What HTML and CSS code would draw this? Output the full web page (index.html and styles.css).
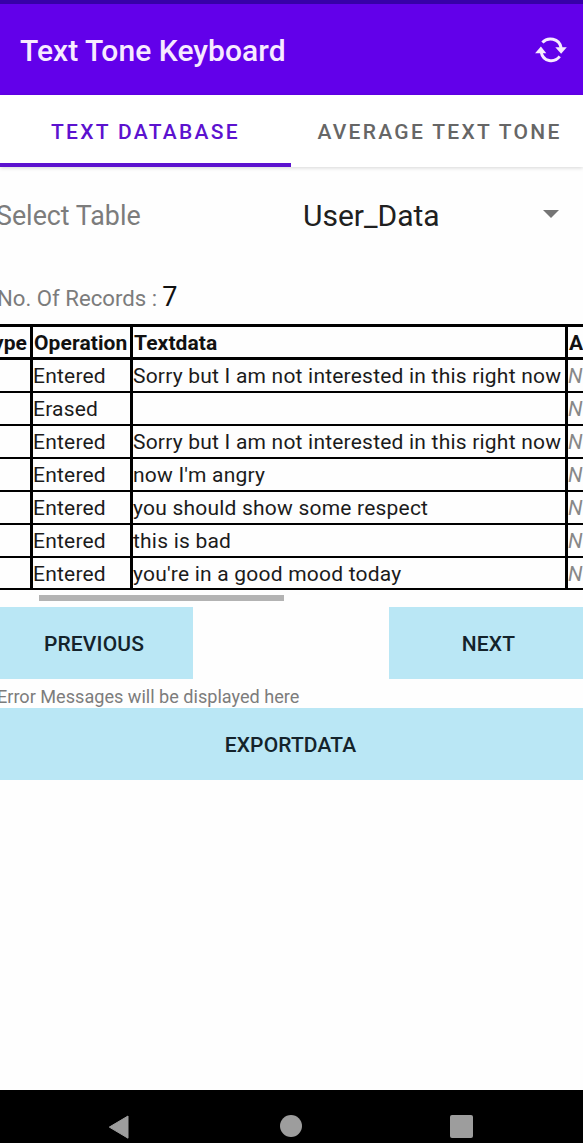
FILE: index.html
```html
<!DOCTYPE html>
<html lang="en">
<head>
<meta charset="utf-8">
<title>Text Tone Keyboard</title>
<link rel="stylesheet" href="styles.css">
</head>
<body>
<div class="screen">
  <header class="app-bar">
    <h1 class="title"><span>Text Tone Keyboard</span></h1>
    <svg class="refresh" viewBox="0 0 34 28" width="34" height="28" fill="none" stroke="#f7eaff" stroke-width="2.9">
      <path d="M8.4 6.5C13.5 .8 25.3 1.7 27.2 12"/>
      <path d="M25.7 20.4C20.6 27.1 8.8 26.3 7 15.2"/>
      <path d="M21.3 11.2h11.5l-5.7 6.6z" fill="#f7eaff" stroke="none"/>
      <path d="M1.1 17.2h11.2l-5.4-6.6z" fill="#f7eaff" stroke="none"/>
    </svg>
  </header>
  <nav class="tabs">
    <a class="tab active"><span>TEXT DATABASE</span></a>
    <a class="tab"><span>AVERAGE TEXT TONE</span></a>
  </nav>
  <main class="content">
    <div class="select-row">
      <span class="label">Select Table</span>
      <div class="spinner"><span>User_Data</span><i class="caret"></i></div>
    </div>
    <div class="records"><span class="records-label">No. Of Records :</span><span class="count">7</span></div>
    <div class="table">
      <div class="row head"><div class="cell type"><span>Type</span></div><div class="cell"><span>Operation</span></div><div class="cell"><span>Textdata</span></div><div class="cell"><span>A</span></div></div>
      <div class="row"><div class="cell"></div><div class="cell"><span>Entered</span></div><div class="cell"><span>Sorry but I am not interested in this right now</span></div><div class="cell null"><span>N</span></div></div>
      <div class="row"><div class="cell"></div><div class="cell"><span>Erased</span></div><div class="cell"></div><div class="cell null"><span>N</span></div></div>
      <div class="row"><div class="cell"></div><div class="cell"><span>Entered</span></div><div class="cell"><span>Sorry but I am not interested in this right now</span></div><div class="cell null"><span>N</span></div></div>
      <div class="row"><div class="cell"></div><div class="cell"><span>Entered</span></div><div class="cell"><span>now I'm angry</span></div><div class="cell null"><span>N</span></div></div>
      <div class="row"><div class="cell"></div><div class="cell"><span>Entered</span></div><div class="cell"><span>you should show some respect</span></div><div class="cell null"><span>N</span></div></div>
      <div class="row"><div class="cell"></div><div class="cell"><span>Entered</span></div><div class="cell"><span>this is bad</span></div><div class="cell null"><span>N</span></div></div>
      <div class="row last"><div class="cell"></div><div class="cell"><span>Entered</span></div><div class="cell"><span>you're in a good mood today</span></div><div class="cell null"><span>N</span></div></div>
    </div>
    <div class="scrollbar"></div>
    <div class="pager">
      <button class="btn prev"><span>PREVIOUS</span></button>
      <button class="btn next"><span>NEXT</span></button>
    </div>
    <p class="message"><span>Error Messages will be displayed here</span></p>
    <button class="btn export"><span>EXPORTDATA</span></button>
  </main>
  <footer class="nav-bar">
    <svg class="back" width="22" height="26" viewBox="0 0 22 26"><path d="M21 2v22.2L2.3 13.1z" fill="#9d9d9d" stroke="#9d9d9d" stroke-linejoin="round"/></svg>
    <i class="home"></i>
    <i class="recent"></i>
  </footer>
</div>
</body>
</html>
```
FILE: styles.css
```css
* { box-sizing: border-box; }
body { margin: 0; background: #fff; font-family: Roboto, sans-serif; }
.screen { width: 583px; height: 1143px; display: flex; flex-direction: column; overflow: hidden; white-space: nowrap; background: #fefefe; }
.app-bar { height: 95px; flex: none; border-top: 4px solid #3700a8; background: #6200ea; display: flex; justify-content: space-between; align-items: center; padding: 1px 15px 0 20px; }
.title { margin: 0; font-size: 30px; font-weight: 500; line-height: 40px; color: #f7eaff; letter-spacing: 0.05px; padding-top: 2px; }
.tabs { height: 72px; flex: none; display: grid; grid-template-columns: 291px 1fr; background: #fff; box-shadow: 0 1px 4px rgba(0,0,0,.16); }
.tab { display: flex; align-items: center; justify-content: center; font-size: 21px; font-weight: 500; letter-spacing: 2.3px; color: #666; padding: 1px 0 0 5px; }
.active { color: #5c12cf; border-bottom: 4px solid #5c12cf; padding: 5px 0 0 0; }
.content { flex: 1; display: flex; flex-direction: column; }
.select-row { height: 97px; display: grid; grid-template-columns: 303px 1fr; align-items: center; line-height: 40px; }
.label { margin-left: -4px; padding-top: 1px; font-size: 26.8px; color: #7c7c7c; }
.spinner { display: flex; align-items: center; justify-content: space-between; padding-right: 24px; font-size: 30px; color: #202020; }
.caret { border: solid transparent; border-width: 8px 8px 0; border-top-color: #757575; margin-top: -3px; }
.records { height: 60px; display: flex; align-items: baseline; gap: 5px; padding-top: 15px; line-height: 36px; }
.records-label { margin-left: -3px; font-size: 22.2px; color: #7c7c7c; }
.count { font-size: 27px; color: #111; }
.table { border-top: 3px solid #000; }
.row { display: grid; grid-template-columns: 33px 100px 435px 15px; height: 33px; border-bottom: 2px solid #000; font-size: 21px; line-height: 32px; letter-spacing: 0.21px; color: #1b1b1b; }
.row.head { font-weight: 700; color: #111; border-bottom-width: 3px; line-height: 33px; letter-spacing: 0.1px; }
.row.head .cell:not(.type) { padding-left: 1px; }
.row.last { height: 32px; }
.cell { border-right: 3px solid #000; overflow: hidden; }
.cell:last-child { border-right: 0; }
.type { display: flex; justify-content: flex-end; padding-right: 3px; }
.null { color: #888; font-style: italic; }
.scrollbar { width: 245px; height: 6px; margin: 5px 0 6px 39px; background: #b3b3b3; }
.pager { display: flex; justify-content: space-between; }
.btn { flex: none; height: 72px; border: 0; padding: 1px 0 0; background: #bae7f5; color: #14232b; font: 500 21px Roboto, sans-serif; letter-spacing: 0.15px; }
.prev { width: 193px; padding-right: 5px; text-align: center; }
.next { width: 194px; padding-left: 5px; }
.message { margin: 0 0 0 -3px; height: 29px; line-height: 36px; font-size: 18.1px; color: #7c7c7c; }
.export { width: 583px; padding-right: 2px; }
.nav-bar { height: 53px; flex: none; background: #000; display: flex; align-items: flex-start; padding: 24px 0 0 107px; }
.home { width: 22px; height: 22px; margin: 1px 0 0 151px; border-radius: 50%; background: #9d9d9d; }
.recent { width: 23px; height: 23px; margin: 1px 0 0 148px; border-radius: 2px; background: #9d9d9d; }
```
